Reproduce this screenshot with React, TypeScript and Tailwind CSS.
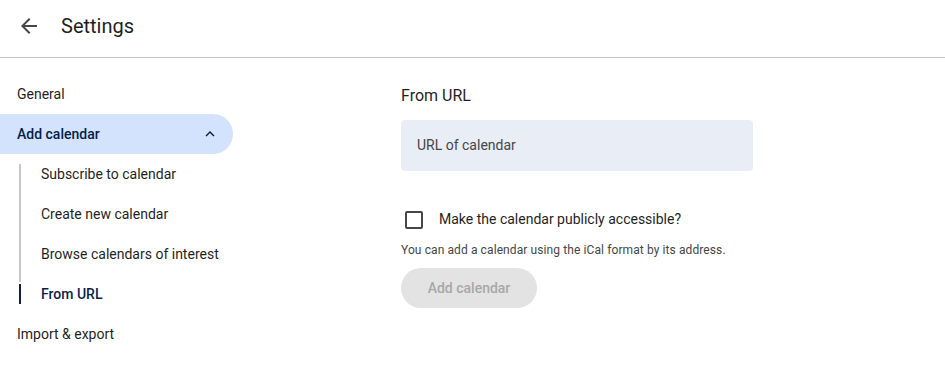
import React from 'react';

const font = { fontFamily: 'Roboto, "Noto Sans", sans-serif' };

// line: 'top' starts 10px down, 'active' shows dark segment only
const SubItem: React.FC<{ label: string; line: 'top' | 'mid' | 'active' }> = ({ label, line }) => (
  <div className="flex h-10 items-center">
    <div className="ml-[19px] flex h-full w-[2px] flex-col">
      {line === 'top' && <div className="mt-[10px] w-[2px] flex-1 bg-[#c4c7c5]" />}
      {line === 'mid' && <div className="h-full w-[2px] bg-[#c4c7c5]" />}
      {line === 'active' && (
        <>
          <div className="h-[8px] w-[2px] bg-[#c4c7c5]" />
          <div className="mt-[2px] h-[20px] w-[2px] bg-[#0b1f4b]" />
        </>
      )}
    </div>
    <span className={`ml-[20px] text-[14px] ${line === 'active' ? 'font-medium text-[#0b1f4b]' : 'text-[#1f1f1f]'}`}>{label}</span>
  </div>
);

const App: React.FC = () => {
  return (
    <div className="h-[376px] w-[945px] overflow-hidden bg-white text-[#1f1f1f]" style={font}>
      {/* Header */}
      <header className="flex h-[58px] items-center border-b border-[#c7c7c7] pb-[6px]">
        <button className="ml-[17px] flex h-6 w-6 items-center justify-center text-[#444746]">
          <svg width="24" height="24" viewBox="0 0 24 24" fill="currentColor">
            <path d="M20 11H7.83l5.59-5.59L12 4l-8 8 8 8 1.41-1.41L7.83 13H20v-2z" />
          </svg>
        </button>
        <h1 className="ml-[20px] text-[20px] text-[#1f1f1f]">Settings</h1>
      </header>

      <div className="flex">
        {/* Sidebar */}
        <nav className="w-[233px] pt-[16px]">
          <div className="flex h-10 items-center pl-[17px] text-[14px]">General</div>
          <div className="flex h-10 items-center justify-between rounded-r-full bg-[#d3e3fd] pl-[17px] pr-[14px] text-[14px] font-medium text-[#041e49]">
            <span>Add calendar</span>
            <svg width="18" height="18" viewBox="0 0 24 24" fill="currentColor">
              <path d="M7.41 15.41 12 10.83l4.59 4.58L18 14l-6-6-6 6z" />
            </svg>
          </div>
          <SubItem label="Subscribe to calendar" line="top" />
          <SubItem label="Create new calendar" line="mid" />
          <SubItem label="Browse calendars of interest" line="mid" />
          <SubItem label="From URL" line="active" />
          <div className="flex h-10 items-center pl-[17px] text-[14px]">Import &amp; export</div>
        </nav>

        {/* Content */}
        <main className="ml-[168px] w-[352px] pt-[26px]">
          <h2 className="text-[16px] leading-[24px] text-[#1f1f1f]">From URL</h2>
          <div className="mt-[12px] flex h-[51px] items-center rounded-[4px] bg-[#e9edf6] px-4 text-[14px] text-[#444746]">
            URL of calendar
          </div>
          <label className="mt-[38px] flex items-center">
            <span className="ml-[4px] h-[18px] w-[18px] rounded-[2px] border-2 border-[#444746]" />
            <span className="ml-[16px] text-[14px] text-[#1f1f1f]">Make the calendar publicly accessible?</span>
          </label>
          <p className="mt-[11px] text-[12px] tracking-[0.1px] text-[#444746]">You can add a calendar using the iCal format by its address.</p>
          <button className="mt-[9px] h-10 w-[136px] rounded-full bg-[#e3e3e3] text-[14px] font-medium text-[#a8a8a8]">
            Add calendar
          </button>
        </main>
      </div>
    </div>
  );
};

export default App;
